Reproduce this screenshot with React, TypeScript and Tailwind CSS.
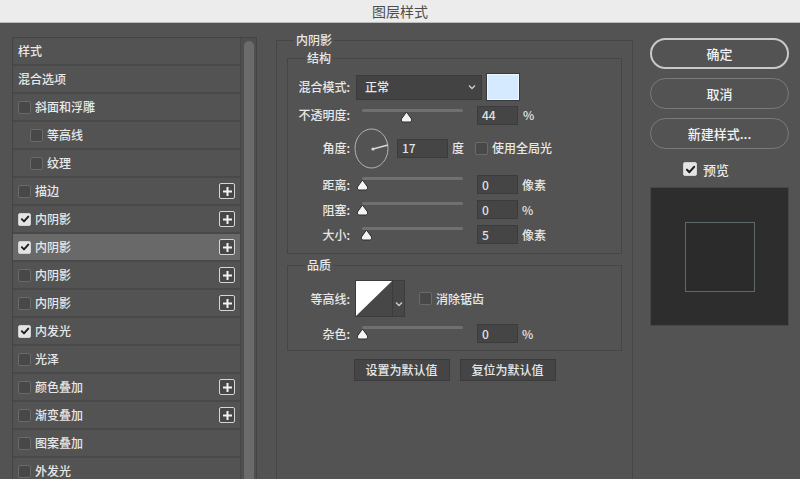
import React from "react";

type Item = {
  label: string;
  header?: boolean;
  checked?: boolean;
  indent?: boolean;
  plus?: boolean;
  selected?: boolean;
};

const items: Item[] = [
  { label: "样式", header: true },
  { label: "混合选项", header: true },
  { label: "斜面和浮雕" },
  { label: "等高线", indent: true },
  { label: "纹理", indent: true },
  { label: "描边", plus: true },
  { label: "内阴影", checked: true, plus: true },
  { label: "内阴影", checked: true, plus: true, selected: true },
  { label: "内阴影", plus: true },
  { label: "内阴影", plus: true },
  { label: "内发光", checked: true },
  { label: "光泽" },
  { label: "颜色叠加", plus: true },
  { label: "渐变叠加", plus: true },
  { label: "图案叠加" },
  { label: "外发光" },
  { label: "投影", plus: true },
];

function CheckBox({ checked, size = 13 }: { checked?: boolean; size?: number }) {
  return (
    <span
      className={
        checked
          ? "flex items-center justify-center rounded-[2px] bg-[#e4e4e4] border border-[#d0d0d0] shrink-0"
          : "flex items-center justify-center rounded-[2px] bg-[#484848] border border-[#6a6a6a] shrink-0"
      }
      style={{ width: size, height: size }}
    >
      {checked && (
        <svg width={size - 3} height={size - 3} viewBox="0 0 10 10">
          <path d="M1.8 5.2 L4 7.4 L8.3 2.6" fill="none" stroke="#1e1e1e" strokeWidth="1.9" strokeLinecap="round" strokeLinejoin="round" />
        </svg>
      )}
    </span>
  );
}

function PlusButton() {
  return (
    <span className="w-[16px] h-[16px] rounded-[2px] border-[1.5px] border-[#d6d6d6] bg-[#474747] flex items-center justify-center">
      <svg width="11" height="11" viewBox="0 0 11 11">
        <path d="M5.5 1 V10 M1 5.5 H10" stroke="#f2f2f2" strokeWidth="2" />
      </svg>
    </span>
  );
}

function Thumb() {
  return (
    <svg width="13" height="12" viewBox="0 0 13 12">
      <path d="M6.5 1 L11.6 8 Q12.4 11 10 11 L3 11 Q0.6 11 1.4 8 Z" fill="#f4f4f4" stroke="#2e2e2e" strokeWidth="1" />
    </svg>
  );
}

function Slider({ pct }: { pct: number }) {
  return (
    <div className="relative w-[114px] h-full shrink-0">
      <div className="absolute left-[6px] top-[5px] w-[101px] h-[3px] rounded-full bg-[#707070]" />
      <div className="absolute top-[7px] w-[13px] h-[12px]" style={{ left: `${-0.5 + pct * 1.01}px` }}>
        <Thumb />
      </div>
    </div>
  );
}

function NumInput({ value, w = 41 }: { value: string; w?: number }) {
  return (
    <div
      className="h-[19px] bg-[#454545] border border-[#3b3b3b] pl-[4px] flex items-center text-[12px] leading-none text-[#e2e2e2] shrink-0"
      style={{ width: w }}
    >
      {value}
    </div>
  );
}

function Label({ children }: { children: React.ReactNode }) {
  return <div className="w-[62px] text-right text-[12px] leading-[14px] shrink-0">{children}</div>;
}

function SliderRow({ label, pct, value, unit }: { label: string; pct: number; value: string; unit: string }) {
  return (
    <div className="flex items-center h-[25px]">
      <Label>{label}</Label>
      <div className="w-[6px]" />
      <Slider pct={pct} />
      <div className="w-[7px]" />
      <NumInput value={value} />
      <div className="ml-[4px] text-[12px] leading-[14px]">{unit}</div>
    </div>
  );
}

function Chevron() {
  return (
    <svg width="8" height="6" viewBox="0 0 8 6">
      <path d="M1 1.5 L4 4.5 L7 1.5" fill="none" stroke="#cfcfcf" strokeWidth="1.3" />
    </svg>
  );
}

export default function App() {
  return (
    <div className="w-[800px] h-[479px] overflow-hidden bg-[#535353] text-[#e8e8e8] font-medium font-['Noto_Sans_CJK_SC','Noto_Sans',sans-serif] flex flex-col">
      <div className="h-[23px] shrink-0 bg-[#ececec] border-b border-[#bdbdbd] flex items-center justify-center text-[14px] leading-none text-[#4d4d4d] font-normal">
        图层样式
      </div>
      <div className="flex flex-1 min-h-0">
        {/* Left list */}
        <div className="ml-[12px] mt-[14px] w-[245px] h-[460px] border border-[#444444] flex shrink-0">
          <div className="w-[227px] flex flex-col">
            {items.map((it, i) => (
              <div
                key={i}
                className={
                  "h-[28px] shrink-0 border-b-2 border-[#494949] flex items-center pr-[5px] " +
                  (it.selected ? "bg-[#696969] " : "") +
                  (it.indent ? "pl-[17px]" : "pl-[5px]")
                }
              >
                {!it.header && <CheckBox checked={it.checked} />}
                <span className={"text-[12px] leading-[14px] " + (it.header ? "" : "ml-[4px]")}>{it.label}</span>
                <div className="flex-1" />
                {it.plus && <PlusButton />}
              </div>
            ))}
          </div>
          <div className="w-[16px] border-l border-[#474747] bg-[#4f4f4f] flex justify-center pt-[3px]">
            <div className="w-[10px] h-full rounded-t-full bg-[#6b6b6b]" />
          </div>
        </div>

        {/* Middle */}
        <div className="ml-[19px] mt-[10px] w-[357px] shrink-0">
          <fieldset className="border border-[#464646] px-[10px] h-[520px]">
            <legend className="ml-[7px] px-[2px] text-[12px] leading-[14px]">内阴影</legend>
            <fieldset className="mt-[4px] border border-[#464646] pb-[6px]">
              <legend className="ml-[17px] px-[2px] text-[12px] leading-[14px]">结构</legend>
              <div className="pt-[8px] flex flex-col">
                <div className="flex items-center h-[28px]">
                  <Label>混合模式:</Label>
                  <div className="w-[6px]" />
                  <div className="w-[126px] h-[25px] bg-[#434343] border border-[#3b3b3b] flex items-center pl-[8px] pr-[5px] text-[12px] leading-[14px]">
                    <span className="flex-1">正常</span>
                    <Chevron />
                  </div>
                  <div className="ml-[4px] w-[34px] h-[28px] bg-[#d5eaff] border border-[#3a3a3a] shadow-[inset_0_0_0_1px_#eef6ff]" />
                </div>
                <div className="mt-[3px] flex items-center h-[22px]">
                  <Label>不透明度:</Label>
                  <div className="w-[6px]" />
                  <Slider pct={44} />
                  <div className="w-[7px]" />
                  <NumInput value="44" />
                  <div className="ml-[5px] text-[12px] leading-[14px]">%</div>
                </div>
                <div className="flex items-center h-[44px]">
                  <Label>角度:</Label>
                  <div className="w-[4px]" />
                  <svg width="35" height="41" viewBox="0 0 35 41" className="shrink-0">
                    <ellipse cx="17.5" cy="20.5" rx="16.5" ry="19.5" fill="none" stroke="#b4b4b4" strokeWidth="1" />
                    <line x1="19" y1="21" x2="34" y2="17" stroke="#d8d8d8" strokeWidth="1.5" />
                    <circle cx="19" cy="21" r="1.6" fill="#d8d8d8" />
                  </svg>
                  <div className="w-[8px]" />
                  <NumInput value="17" w={51} />
                  <div className="ml-[4px] text-[12px] leading-[14px]">度</div>
                  <div className="ml-[11px]">
                    <CheckBox />
                  </div>
                  <div className="ml-[4px] text-[12px] leading-[14px]">使用全局光</div>
                </div>
                <div className="mt-[2px]">
                  <SliderRow label="距离:" pct={0} value="0" unit="像素" />
                  <SliderRow label="阻塞:" pct={0} value="0" unit="%" />
                  <SliderRow label="大小:" pct={4} value="5" unit="像素" />
                </div>
              </div>
            </fieldset>

            <fieldset className="mt-[4px] border border-[#464646] pb-[4px]">
              <legend className="ml-[17px] px-[2px] text-[12px] leading-[14px]">品质</legend>
              <div className="pt-[8px] flex flex-col">
                <div className="flex items-center h-[37px]">
                  <Label>等高线:</Label>
                  <div className="w-[5px]" />
                  <div className="w-[38px] h-[37px] border border-[#3c3c3c] shrink-0">
                    <svg width="36" height="35" viewBox="0 0 36 35" className="block">
                      <rect width="36" height="35" fill="#474747" />
                      <path d="M0 0 H36 L0 35 Z" fill="#ffffff" />
                    </svg>
                  </div>
                  <div className="w-[12px] h-[37px] bg-[#474747] border border-l-0 border-[#3c3c3c] flex items-center justify-center pt-[10px] shrink-0">
                    <Chevron />
                  </div>
                  <div className="ml-[14px]">
                    <CheckBox />
                  </div>
                  <div className="ml-[4px] text-[12px] leading-[14px]">消除锯齿</div>
                </div>
                <div className="mt-[4px]">
                  <SliderRow label="杂色:" pct={0} value="0" unit="%" />
                </div>
              </div>
            </fieldset>

            <div className="mt-[8px] flex justify-center gap-[10px]">
              <div className="w-[96px] h-[22px] bg-[#454545] border border-[#3b3b3b] flex items-center justify-center text-[12px] leading-[14px]">
                设置为默认值
              </div>
              <div className="w-[96px] h-[22px] bg-[#454545] border border-[#3b3b3b] flex items-center justify-center text-[12px] leading-[14px]">
                复位为默认值
              </div>
            </div>
          </fieldset>
        </div>

        {/* Right */}
        <div className="ml-[17px] mt-[15px] w-[139px] shrink-0 flex flex-col">
          <div className="h-[31px] rounded-full border-2 border-[#c9c9c9] flex items-center justify-center text-[13px] leading-none text-[#f2f2f2]">
            确定
          </div>
          <div className="mt-[9px] h-[31px] rounded-full border border-[#7a7a7a] flex items-center justify-center text-[13px] leading-none text-[#f2f2f2]">
            取消
          </div>
          <div className="mt-[9px] h-[31px] rounded-full border border-[#7a7a7a] flex items-center justify-center text-[13px] leading-none text-[#f2f2f2]">
            新建样式...
          </div>
          <div className="mt-[10px] h-[20px] flex items-center pl-[33px]">
            <CheckBox checked size={14} />
            <span className="ml-[6px] text-[13px] leading-none">预览</span>
          </div>
          <div className="mt-[8px] w-[139px] h-[139px] bg-[#2d2d2d] border border-[#474747] flex items-center justify-center">
            <div className="w-[70px] h-[70px] border border-[#5b696b] bg-[#2b2b2b]" />
          </div>
        </div>
      </div>
    </div>
  );
}
